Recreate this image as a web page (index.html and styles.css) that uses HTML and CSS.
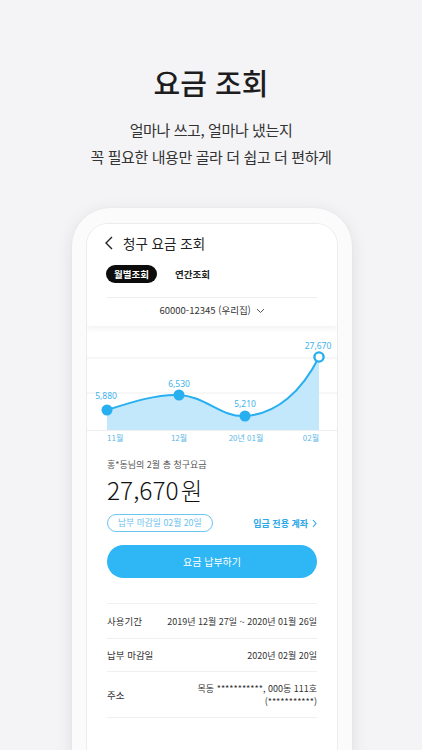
FILE: index.html
```html
<!DOCTYPE html>
<html lang="ko">
<head>
<meta charset="utf-8">
<title>요금 조회</title>
<link rel="stylesheet" href="styles.css">
</head>
<body>
<div class="page">
  <header class="hero">
    <h1 class="hero-title">요금 조회</h1>
    <p class="hero-sub">얼마나 쓰고, 얼마나 냈는지<br>꼭 필요한 내용만 골라 더 쉽고 더 편하게</p>
  </header>

  <div class="phone">
    <div class="screen">
      <div class="top">
        <div class="nav">
          <svg class="back" width="12" height="14" viewBox="0 0 12 14"><path d="M9 1 L3 7 L9 13" fill="none" stroke="#222" stroke-width="1.4"/></svg>
          <span class="nav-title">청구 요금 조회</span>
        </div>
        <div class="tabs">
          <span class="tab tab-on">월별조회</span>
          <span class="tab">연간조회</span>
        </div>
        <div class="account">60000-12345 (우리집)
          <svg class="chev" width="9" height="6" viewBox="0 0 9 6"><path d="M1 1 L4.5 4.5 L8 1" fill="none" stroke="#555" stroke-width="1"/></svg>
        </div>
      </div>

      <svg class="chart" width="252" height="122" viewBox="0 0 252 122">
        <line x1="0" y1="32" x2="252" y2="32" stroke="#efefef" stroke-width="1"/>
        <line x1="0" y1="67" x2="252" y2="67" stroke="#efefef" stroke-width="1"/>
        <line x1="0" y1="104.5" x2="252" y2="104.5" stroke="#efefef" stroke-width="1"/>
        <path d="M20,84 C45,76 70,68 92,69 C118,70 135,92 158,90 C190,88 215,65 232,31 L232,104 L20,104 Z" fill="#c4e8fb"/>
        <path d="M20,84 C45,76 70,68 92,69 C118,70 135,92 158,90 C190,88 215,65 232,31" fill="none" stroke="#27aff0" stroke-width="2"/>
        <circle cx="20" cy="84" r="5.5" fill="#27aff0"/>
        <circle cx="92" cy="69" r="5.5" fill="#27aff0"/>
        <circle cx="158" cy="90" r="5.5" fill="#27aff0"/>
        <circle cx="232" cy="31" r="4.6" fill="#fff" stroke="#27aff0" stroke-width="2.4"/>
        <g class="val">
          <text x="19" y="73" text-anchor="middle">5,880</text>
          <text x="92" y="61" text-anchor="middle">6,530</text>
          <text x="158" y="81" text-anchor="middle">5,210</text>
          <text x="231" y="23" text-anchor="middle">27,670</text>
        </g>
        <g class="axis">
          <text x="20" y="115">11월</text>
          <text x="92" y="115" text-anchor="middle">12월</text>
          <text x="159" y="115" text-anchor="middle">20년 01월</text>
          <text x="232" y="115" text-anchor="end">02월</text>
        </g>
      </svg>

      <div class="summary">
        <p class="caption">홍*동님의 2월 총 청구요금</p>
        <p class="amount">27,670<span class="won">원</span></p>
        <div class="due-row">
          <span class="due-pill">납부 마감일 02월 20일</span>
          <span class="account-link">입금 전용 계좌
            <svg width="5" height="9" viewBox="0 0 5 9"><path d="M1 1 L4 4.5 L1 8" fill="none" stroke="#29a9e8" stroke-width="1.1"/></svg>
          </span>
        </div>
        <div class="pay-btn">요금 납부하기</div>

        <div class="rows">
          <div class="row row-1">
            <span class="label">사용기간</span>
            <span class="value">2019년 12월 27일 ~ 2020년 01월 26일</span>
          </div>
          <div class="row row-2">
            <span class="label">납부 마감일</span>
            <span class="value">2020년 02월 20일</span>
          </div>
          <div class="row row-3">
            <span class="label">주소</span>
            <span class="value">목동 ***********, 000동 111호<br>(***********)</span>
          </div>
        </div>
      </div>
    </div>
  </div>
</div>
</body>
</html>
```

FILE: styles.css
```css
* { box-sizing: border-box; }
html, body { margin: 0; padding: 0; }
body {
  width: 422px;
  height: 750px;
  overflow: hidden;
  background: #f4f4f6;
  font-family: "Noto Sans CJK KR", "Noto Sans", sans-serif;
  color: #222;
}
.page { width: 422px; height: 750px; overflow: hidden; }

.hero { text-align: center; padding-top: 61px; }
.hero-title {
  margin: 0;
  font-size: 29px;
  line-height: 42px;
  font-weight: 500;
  color: #1d1d1f;
}
.hero-sub {
  margin: 13px 0 0;
  font-size: 15px;
  line-height: 27px;
  letter-spacing: -0.4px;
  color: #333;
}

.phone {
  margin: 38px 0 0 72px;
  width: 280px;
  height: 600px;
  padding: 15px 14px 0;
  background: #fbfbfc;
  border-radius: 38px;
  box-shadow: 0 4px 18px rgba(0,0,0,0.09), 0 0 2px rgba(0,0,0,0.05);
}
.screen {
  width: 252px;
  height: 585px;
  background: #fff;
  border: 1px solid #ececec;
  border-radius: 22px;
  overflow: hidden;
}

.top {
  position: relative;
  z-index: 1;
  background: #fff;
  padding: 0 20px;
  box-shadow: 0 3px 5px rgba(0,0,0,0.05);
}
.nav {
  display: flex;
  align-items: center;
  height: 29px;
  padding-top: 8px;
  margin-left: -4px;
}
.back { display: block; margin-right: 8px; }
.nav-title { font-size: 13.5px; color: #222; }

.tabs {
  display: flex;
  align-items: center;
  gap: 18px;
  margin-top: 12px;
  height: 18px;
}
.tab {
  font-size: 9.5px;
  font-weight: 700;
  color: #222;
  line-height: 18px;
}
.tab-on {
  background: #0c0c0c;
  color: #fff;
  border-radius: 9px;
  padding: 0 8px;
  margin-left: -1px;
}

.account {
  margin-top: 14px;
  border-top: 1px solid #eeeeee;
  height: 29px;
  padding-top: 4px;
  text-align: center;
  font-size: 9.5px;
  line-height: 16px;
  color: #333;
}
.chev { display: inline-block; vertical-align: middle; margin-left: 2px; }

.chart { display: block; }
.val text { font-family: "Noto Sans", "Noto Sans CJK KR", sans-serif; font-size: 8.5px; fill: #3fb2ea; }
.axis text { font-family: "Noto Sans CJK KR", sans-serif; font-size: 8px; fill: #5cb9e8; }

.summary { padding: 0 20px; }
.caption {
  margin: 10px 0 0;
  font-size: 9px;
  line-height: 14px;
  color: #555;
}
.amount {
  margin: 3px 0 0;
  font-size: 24.5px;
  line-height: 30px;
  font-weight: 300;
  color: #111;
  letter-spacing: 0;
}
.won { font-size: 23.5px; margin-left: 2px; }

.due-row {
  display: flex;
  align-items: center;
  justify-content: space-between;
  margin-top: 9px;
  height: 18px;
}
.due-pill {
  border: 1px solid #6cc6f2;
  border-radius: 9px;
  height: 18px;
  line-height: 16px;
  padding: 0 10px;
  font-size: 8.8px;
  color: #6cc2ee;
}
.account-link {
  display: flex;
  align-items: center;
  gap: 4px;
  font-size: 9px;
  font-weight: 700;
  color: #2aa8e8;
}
.account-link svg { display: block; }

.pay-btn {
  margin-top: 13px;
  height: 33px;
  border-radius: 17px;
  background: #2fb6f5;
  color: #fff;
  font-size: 10px;
  line-height: 33px;
  text-align: center;
}

.rows { margin-top: 25px; border-top: 1px solid #f0f0f0; }
.row {
  display: flex;
  align-items: center;
  justify-content: space-between;
  border-bottom: 1px solid #f0f0f0;
  font-size: 9.5px;
  color: #333;
}
.row .value { font-size: 9px; }
.row-1 { height: 35px; }
.row-2 { height: 33px; }
.row-3 { height: 46px; }
.value { text-align: right; line-height: 13px; }
```
